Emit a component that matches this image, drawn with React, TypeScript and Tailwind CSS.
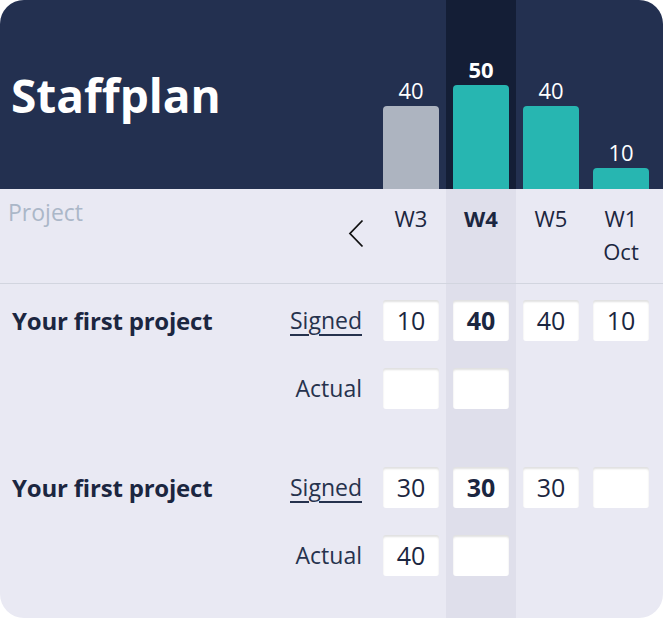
import React from "react";

type Cell = string | null;

const bars = [
  { v: 40, grey: true },
  { v: 50, grey: false },
  { v: 40, grey: false },
  { v: 10, grey: false },
];

const weeks = ["W3", "W4", "W5", "W1\nOct"];

const blocks: { name: string; signed: Cell[]; actual: Cell[] }[] = [
  { name: "Your first project", signed: ["10", "40", "40", "10"], actual: ["", "", null, null] },
  { name: "Your first project", signed: ["30", "30", "30", ""], actual: ["40", "", null, null] },
];

function Line({
  name,
  label,
  underline,
  cells,
  pad,
}: {
  name?: string;
  label: string;
  underline?: boolean;
  cells: Cell[];
  pad: string;
}) {
  return (
    <div className="grid grid-cols-[1fr_70px_70px_70px_70px] pr-[7px]">
      <div className={`${pad} flex`}>
        <div className="h-[41px] flex items-center w-full">
          {name && (
            <span className="pl-3 font-bold text-[24px] text-[#1b2640] leading-none tracking-[-0.2px]">{name}</span>
          )}
          <span
            className={`ml-auto pr-[14px] text-[23px] leading-none text-[#26324d] ${
              underline ? "underline underline-offset-[5px] decoration-[1.5px]" : ""
            }`}
          >
            {label}
          </span>
        </div>
      </div>
      {cells.map((c, i) => (
        <div key={i} className={`${pad} flex justify-center ${i === 1 ? "bg-[#dfdfeb]" : ""}`}>
          {c !== null && (
            <div
              className={`w-[56px] h-[41px] bg-white rounded-[3px] shadow-[inset_0_2px_2px_rgba(0,0,0,0.12)] flex items-center justify-center text-[25px] leading-none text-[#1b2640] ${
                i === 1 ? "font-bold" : ""
              }`}
            >
              {c}
            </div>
          )}
        </div>
      ))}
    </div>
  );
}

export default function App() {
  return (
    <div className="w-[663px] h-[618px] bg-white" style={{ fontFamily: '"Open Sans", "Noto Sans", sans-serif' }}>
      <div className="w-full h-full rounded-[24px] overflow-hidden bg-[#e9e9f3] flex flex-col">
        {/* Dark header with chart */}
        <div className="grid grid-cols-[1fr_70px_70px_70px_70px] pr-[7px] h-[189px] bg-[#233050] shrink-0">
          <div className="flex items-center pl-[11px]">
            <h1 className="text-[46px] font-bold text-white leading-none">Staffplan</h1>
          </div>
          {bars.map((b, i) => (
            <div
              key={i}
              className={`flex flex-col items-center justify-end ${i === 1 ? "bg-[#141e36]" : ""}`}
            >
              <span className={`text-[22px] leading-none mb-[5px] text-white ${i === 1 ? "font-bold" : ""}`}>
                {b.v}
              </span>
              <div
                className={`w-[56px] rounded-t-[4px] ${b.grey ? "bg-[#adb4c0]" : "bg-[#27b6b1]"}`}
                style={{ height: Math.round(b.v * 2.08) }}
              />
            </div>
          ))}
        </div>

        {/* Week header row */}
        <div className="grid grid-cols-[1fr_70px_70px_70px_70px] pr-[7px] h-[95px] border-b border-[#d2d5df] shrink-0">
          <div className="flex items-start justify-between">
            <span className="pl-2 pt-[7px] text-[23px] leading-[33px] text-[#abb7c8]">Project</span>
            <svg className="mt-[30px] mr-[12px]" width="17" height="29" viewBox="0 0 17 29" fill="none">
              <polyline points="15.5,1.5 3,14.5 15.5,27.5" stroke="#111111" strokeWidth="1.8" />
            </svg>
          </div>
          {weeks.map((w, i) => (
            <div
              key={i}
              className={`pt-[13px] text-center text-[22px] leading-[33px] text-[#1b2640] whitespace-pre-line ${
                i === 1 ? "bg-[#dfdfeb] font-bold" : ""
              }`}
            >
              {w}
            </div>
          ))}
        </div>

        {/* Project blocks */}
        <div className="flex-1 flex flex-col">
          {blocks.map((b, bi) => (
            <div key={bi}>
              <Line name={b.name} label="Signed" underline cells={b.signed} pad="pt-4 pb-[13px]" />
              <Line label="Actual" cells={b.actual} pad="pt-[14px] pb-[42px]" />
            </div>
          ))}
        </div>
      </div>
    </div>
  );
}
